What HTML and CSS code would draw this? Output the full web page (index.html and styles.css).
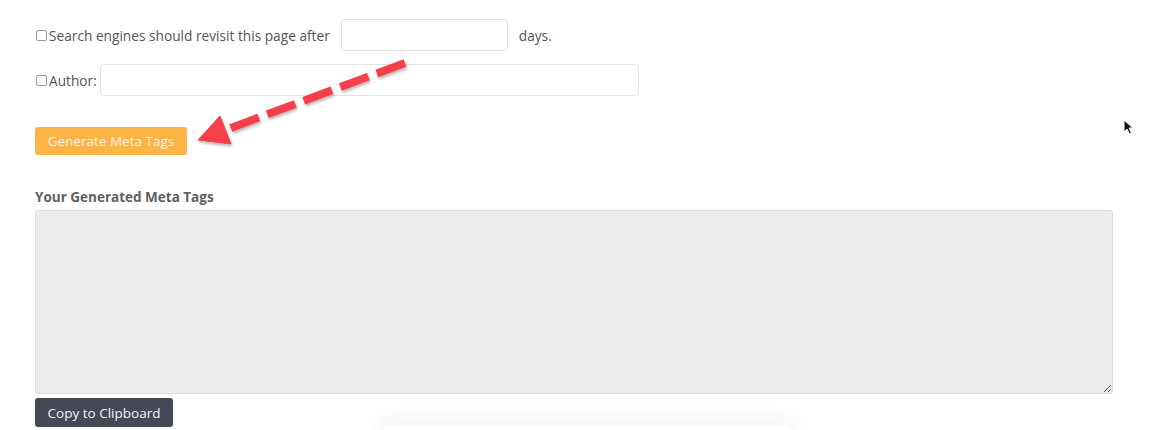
FILE: index.html
```html
<!DOCTYPE html>
<html lang="en">
<head>
<meta charset="utf-8">
<title>Meta Tag Generator</title>
<link rel="stylesheet" href="styles.css">
</head>
<body>
<main class="page">
  <div class="row row-revisit">
    <label class="check-label"><input type="checkbox" class="check">Search engines should revisit this page after</label>
    <input type="text" class="field field-days">
    <span class="unit">days.</span>
  </div>
  <div class="row row-author">
    <label class="check-label"><input type="checkbox" class="check">Author:</label>
    <input type="text" class="field field-author">
  </div>
  <button class="btn btn-generate" type="button">Generate Meta Tags</button>
  <h3 class="out-title">Your Generated Meta Tags</h3>
  <textarea class="output" readonly></textarea>
  <button class="btn btn-copy" type="button">Copy to Clipboard</button>
</main>

<svg class="arrow" width="1167" height="430" viewBox="0 0 1167 430" aria-hidden="true">
  <defs>
    <filter id="sh" x="-20%" y="-20%" width="140%" height="140%">
      <feDropShadow dx="1" dy="2" stdDeviation="1.5" flood-color="#000" flood-opacity="0.3"/>
    </filter>
  </defs>
  <g filter="url(#sh)" fill="#f4414b" stroke="#f4414b">
    <line x1="405" y1="63" x2="228" y2="129" stroke-width="8" stroke-dasharray="30 9" stroke-linecap="butt"/>
    <polygon points="198,140 220,116 231,144" stroke-width="1" stroke-linejoin="round"/>
  </g>
</svg>

<svg class="cursor" width="14" height="18" viewBox="0 0 14 18" aria-hidden="true">
  <path d="M1 1 L1 13 L4 10 L6.5 15 L8.5 14 L6 9 L10 9 Z" fill="#111" stroke="#fff" stroke-width="1"/>
</svg>

<div class="popup-shadow"></div>
</body>
</html>
```

FILE: styles.css
```css
html, body {
  margin: 0;
  padding: 0;
  background: #ffffff;
}

html {
  overflow: hidden;
}

body {
  font-family: "Open Sans", "Noto Sans", "Liberation Sans", sans-serif;
  font-size: 13.7px;
  color: #555555;
  overflow: hidden;
  width: 1167px;
  height: 430px;
  position: relative;
}

.page {
  padding: 19px 0 0 35px;
  display: flex;
  flex-direction: column;
  align-items: flex-start;
}

.row {
  display: flex;
  align-items: center;
  height: 32px;
}

.row-author {
  margin-top: 13px;
}

.check-label {
  display: flex;
  align-items: center;
}

.check {
  -webkit-appearance: none;
  appearance: none;
  width: 11px;
  height: 11px;
  margin: 0 2px 0 1px;
  border: 1px solid #9a9a9a;
  border-radius: 2px;
  background: #fff;
  box-sizing: border-box;
}

.field {
  box-sizing: border-box;
  height: 32px;
  border: 1px solid #e2e2e2;
  border-radius: 4px;
  background: #fff;
  padding: 0 8px;
  font: inherit;
}

.field-days {
  width: 167px;
  margin-left: 11px;
}

.unit {
  margin-left: 11px;
}

.field-author {
  width: 539px;
  margin-left: 3px;
}

.btn {
  font-family: inherit;
  font-size: 13.5px;
  border: none;
  border-radius: 3px;
  color: #ffffff;
  cursor: pointer;
  box-sizing: border-box;
  padding: 0;
}

.btn-generate {
  margin-top: 31px;
  height: 28px;
  width: 152px;
  background: #fdb446;
  color: #fdf3e4;
}

.out-title {
  margin: 33px 0 0 0;
  font-size: 13.5px;
  font-weight: 700;
  color: #606060;
  line-height: 18px;
}

.output {
  margin-top: 4px;
  box-sizing: border-box;
  width: 1078px;
  height: 184px;
  background: #ededee;
  border: 1px solid #dcdcdc;
  border-radius: 3px;
  resize: vertical;
}

.btn-copy {
  margin-top: 4px;
  height: 29px;
  width: 138px;
  background: #454955;
  color: #f2f2f4;
  font-weight: 500;
}

.arrow {
  position: absolute;
  left: 0;
  top: 0;
  pointer-events: none;
}

.cursor {
  position: absolute;
  left: 1123px;
  top: 119px;
}

.popup-shadow {
  position: absolute;
  left: 385px;
  top: 426px;
  width: 405px;
  height: 4px;
  background: #fff;
  border-radius: 10px 10px 0 0;
  box-shadow: 0 0 22px 6px rgba(60, 40, 80, 0.07);
}
```
